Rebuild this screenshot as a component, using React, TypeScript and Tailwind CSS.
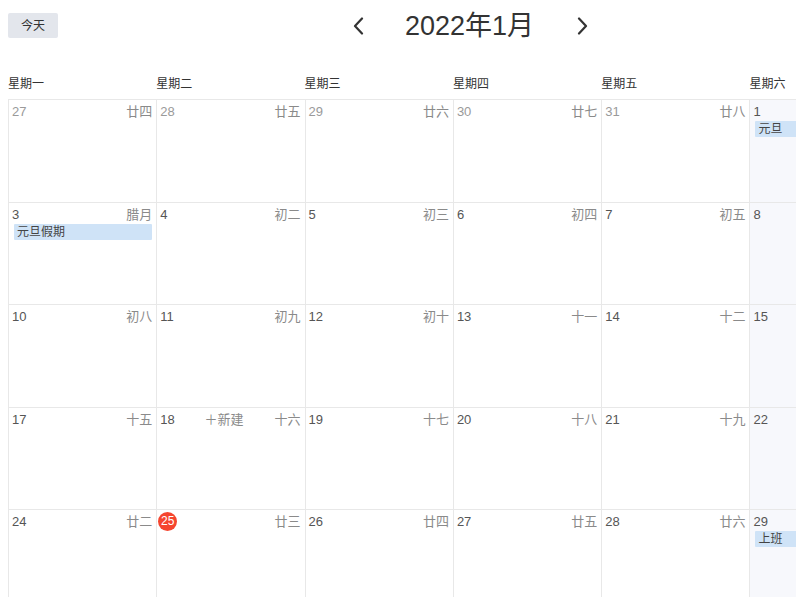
type Day = {
  day: number;
  lunar: string;
  other?: boolean;
  today?: boolean;
  event?: string;
  hover?: boolean;
};

const weekdays = ["星期一", "星期二", "星期三", "星期四", "星期五", "星期六", "星期日"];

const rows: Day[][] = [
  [
    { day: 27, lunar: "廿四", other: true },
    { day: 28, lunar: "廿五", other: true },
    { day: 29, lunar: "廿六", other: true },
    { day: 30, lunar: "廿七", other: true },
    { day: 31, lunar: "廿八", other: true },
    { day: 1, lunar: "廿九", event: "元旦" },
    { day: 2, lunar: "三十", event: "元旦" },
  ],
  [
    { day: 3, lunar: "腊月", event: "元旦假期" },
    { day: 4, lunar: "初二" },
    { day: 5, lunar: "初三" },
    { day: 6, lunar: "初四" },
    { day: 7, lunar: "初五" },
    { day: 8, lunar: "初六" },
    { day: 9, lunar: "初七" },
  ],
  [
    { day: 10, lunar: "初八" },
    { day: 11, lunar: "初九" },
    { day: 12, lunar: "初十" },
    { day: 13, lunar: "十一" },
    { day: 14, lunar: "十二" },
    { day: 15, lunar: "十三" },
    { day: 16, lunar: "十四" },
  ],
  [
    { day: 17, lunar: "十五" },
    { day: 18, lunar: "十六", hover: true },
    { day: 19, lunar: "十七" },
    { day: 20, lunar: "十八" },
    { day: 21, lunar: "十九" },
    { day: 22, lunar: "二十" },
    { day: 23, lunar: "廿一" },
  ],
  [
    { day: 24, lunar: "廿二" },
    { day: 25, lunar: "廿三", today: true },
    { day: 26, lunar: "廿四" },
    { day: 27, lunar: "廿五" },
    { day: 28, lunar: "廿六" },
    { day: 29, lunar: "廿七", event: "上班" },
    { day: 30, lunar: "廿八" },
  ],
];

const Chevron = ({ dir }: { dir: "left" | "right" }) => (
  <svg width="12" height="18" viewBox="0 0 12 18" fill="none" className="text-[#333]">
    <polyline
      points={dir === "left" ? "10,1.5 3,9 10,16.5" : "2,1.5 9,9 2,16.5"}
      stroke="currentColor"
      strokeWidth="2.2"
      strokeLinecap="round"
      strokeLinejoin="round"
    />
  </svg>
);

const DayCell = ({ d, weekend }: { d: Day; weekend: boolean }) => {
  return (
    <div
      className={`h-[102.5px] border-l border-t border-[#e8e8e8] pl-[3px] pr-[4px] pt-[2px] ${
        weekend ? "bg-[#f7f8fc]" : "bg-white"
      }`}
    >
      <div className="flex h-[19px] items-center justify-between text-[13px] leading-[19px]">
        {d.today ? (
          <span className="-ml-[2px] flex h-[19px] w-[19px] items-center justify-center rounded-full bg-[#f5452f] text-[12px] text-white">
            {d.day}
          </span>
        ) : (
          <span className={d.other ? "text-[#9a9a9a]" : "text-[#555]"}>{d.day}</span>
        )}
        {d.hover && <span className="ml-auto mr-[31px] text-[13px] text-[#8a8a8a]">＋新建</span>}
        <span className="text-[13px] text-[#8a8a8a]">{d.lunar}</span>
      </div>
      {d.event && (
        <div className="ml-[2px] h-[16px] rounded-[1px] bg-[#cfe3f7] pl-[3px] text-[12px] leading-[16px] text-[#444]">
          {d.event}
        </div>
      )}
    </div>
  );
};

export default function App() {
  return (
    <div
      className="h-[597px] w-[796px] overflow-hidden bg-white"
      style={{ fontFamily: '"Liberation Sans", "Noto Sans CJK SC", sans-serif' }}
    >
      {/* Toolbar */}
      <div className="relative flex h-[52px] items-start px-[8px] pt-[13px]">
        <button className="h-[25px] w-[50px] rounded-[2px] bg-[#e3e6ec] text-[12px] text-[#333]">
          今天
        </button>
        <div className="absolute left-[352px] top-[6px] flex items-center">
          <Chevron dir="left" />
          <span className="ml-[41px] mr-[43px] text-[27px] leading-[40px] text-[#333]">2022年1月</span>
          <Chevron dir="right" />
        </div>
      </div>

      {/* Calendar grid */}
      <div className="ml-[8px] w-[1040px]">
        <div className="grid h-[47px] grid-cols-[repeat(7,148.3px)] items-end pb-[7px]">
          {weekdays.map((w) => (
            <div key={w} className="text-[12px] leading-[16px] text-[#333]">
              {w}
            </div>
          ))}
        </div>
        {rows.map((row, i) => (
          <div key={i} className="grid grid-cols-[repeat(7,148.3px)]">
            {row.map((d, j) => (
              <DayCell key={j} d={d} weekend={j >= 5} />
            ))}
          </div>
        ))}
      </div>
    </div>
  );
}
